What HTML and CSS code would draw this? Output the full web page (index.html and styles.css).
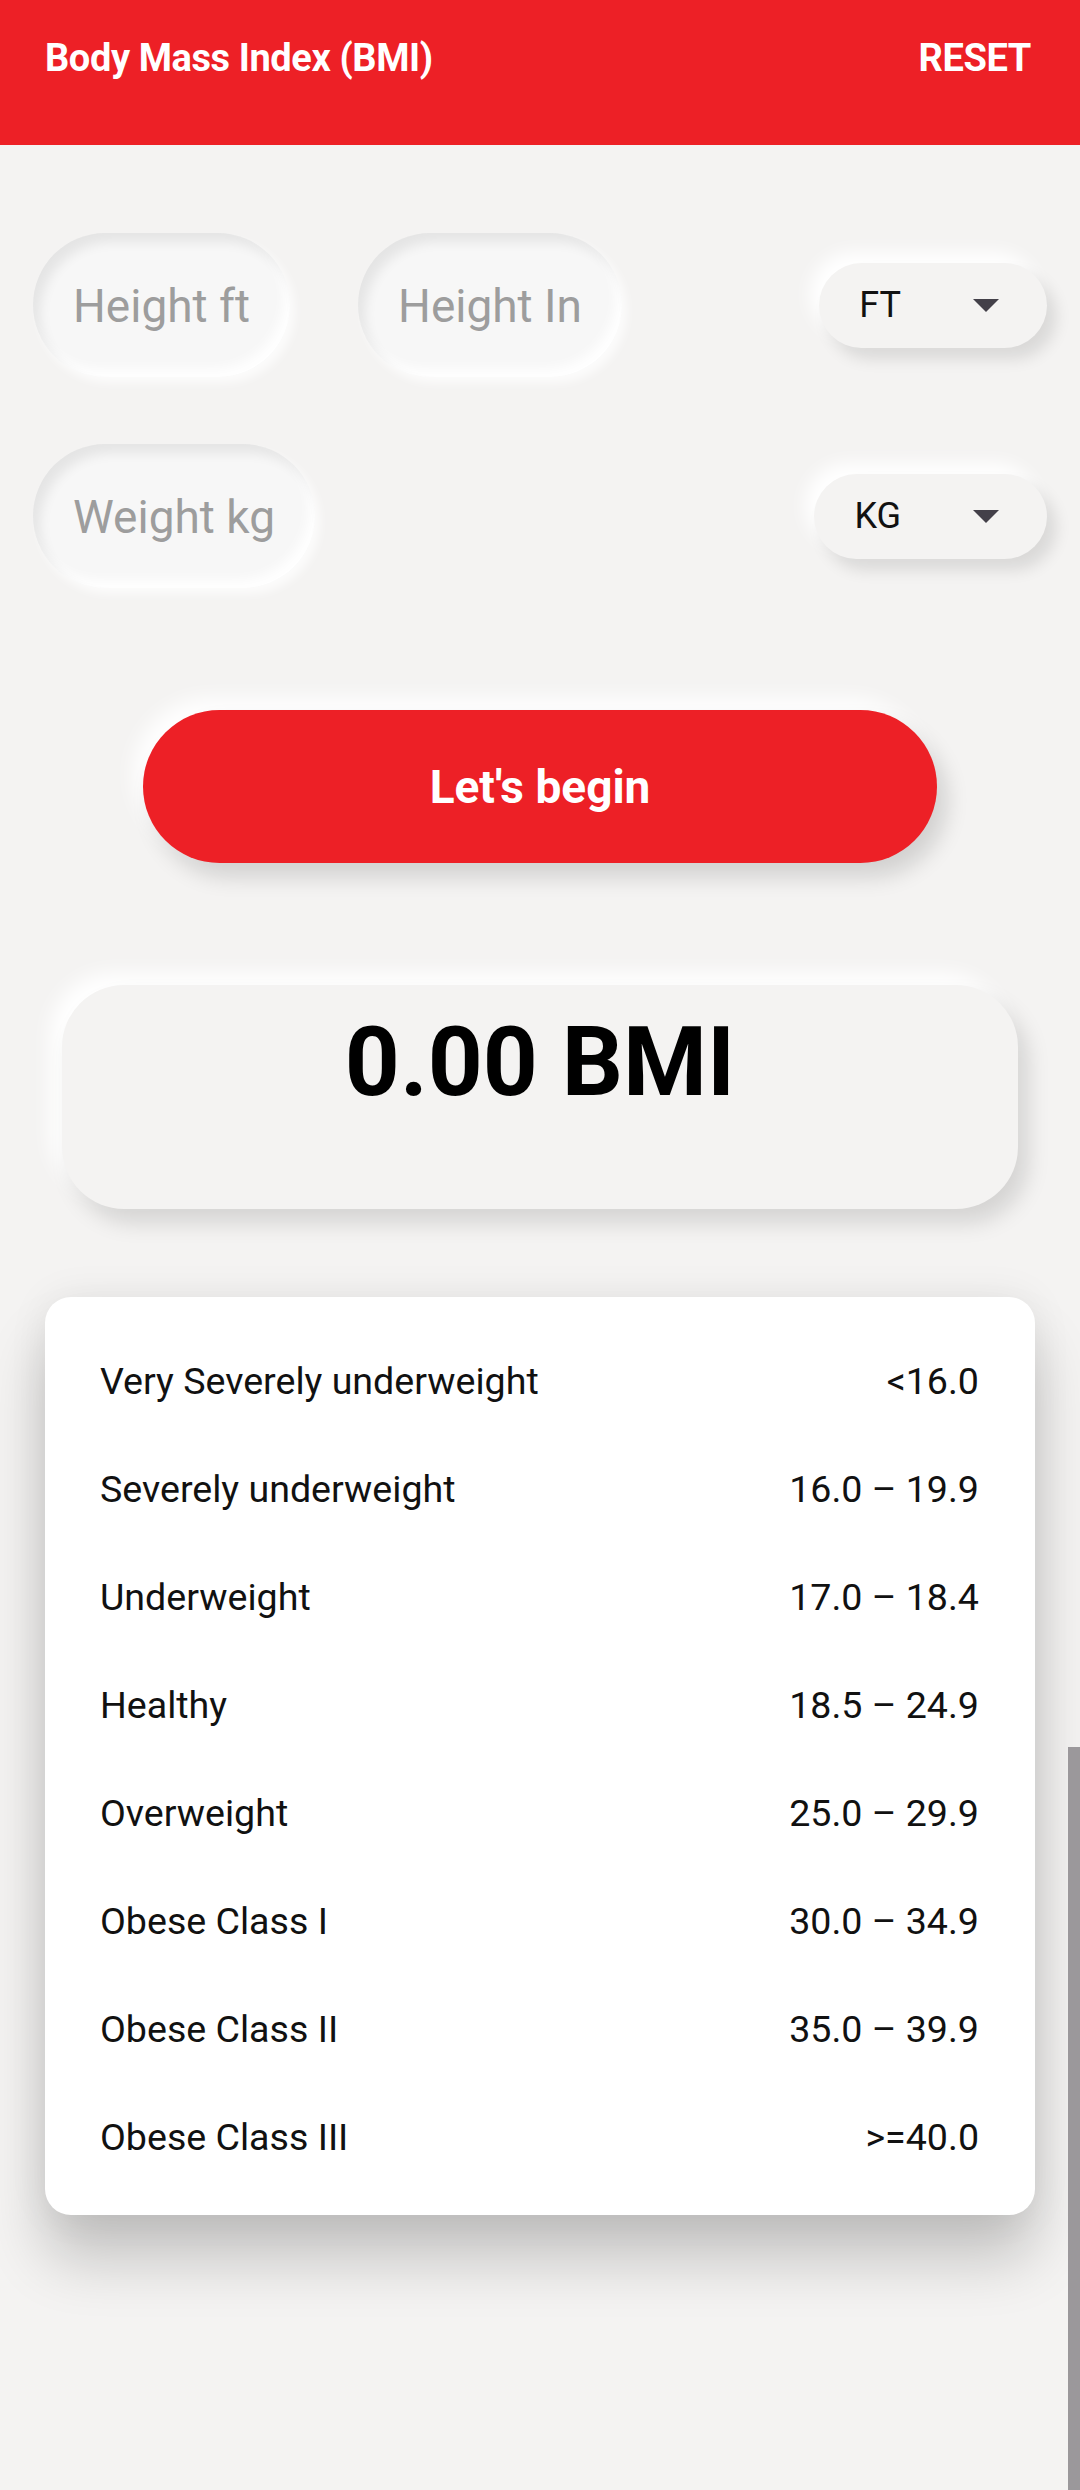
FILE: index.html
```html
<!DOCTYPE html>
<html lang="en">
<head>
<meta charset="utf-8">
<title>Body Mass Index (BMI)</title>
<link rel="stylesheet" href="styles.css">
</head>
<body>
<div class="screen">
  <header class="appbar">
    <span class="appbar-title">Body Mass Index (BMI)</span>
    <span class="appbar-action">RESET</span>
  </header>

  <main class="content">
    <div class="input-row row-height">
      <div class="field-group">
        <div class="field"><span class="placeholder">Height ft</span></div>
        <div class="field"><span class="placeholder">Height In</span></div>
      </div>
      <div class="spinner"><span class="spinner-text">FT</span><span class="caret"></span></div>
    </div>

    <div class="input-row row-weight">
      <div class="field-group">
        <div class="field"><span class="placeholder">Weight kg</span></div>
      </div>
      <div class="spinner"><span class="spinner-text">KG</span><span class="caret"></span></div>
    </div>

    <div class="button-wrap">
      <button class="begin-btn">Let's begin</button>
    </div>

    <div class="result-card">
      <span class="result-text">0.00 BMI</span>
    </div>

    <div class="table-card">
      <div class="table-row"><span>Very Severely underweight</span><span>&lt;16.0</span></div>
      <div class="table-row"><span>Severely underweight</span><span>16.0 – 19.9</span></div>
      <div class="table-row"><span>Underweight</span><span>17.0 – 18.4</span></div>
      <div class="table-row"><span>Healthy</span><span>18.5 – 24.9</span></div>
      <div class="table-row"><span>Overweight</span><span>25.0 – 29.9</span></div>
      <div class="table-row"><span>Obese Class I</span><span>30.0 – 34.9</span></div>
      <div class="table-row"><span>Obese Class II</span><span>35.0 – 39.9</span></div>
      <div class="table-row"><span>Obese Class III</span><span>&gt;=40.0</span></div>
    </div>
  </main>

  <div class="scrollbar"></div>
</div>
</body>
</html>
```

FILE: styles.css
```css
* { box-sizing: border-box; }

html, body {
  margin: 0;
  padding: 0;
  background: #f4f3f2;
}

body {
  font-family: Roboto, "Noto Sans", "Liberation Sans", sans-serif;
  color: #111;
}

.screen {
  position: relative;
  width: 1080px;
  height: 2490px;
  overflow: hidden;
  background: #f4f3f2;
}

/* App bar */
.appbar {
  height: 145px;
  background: #ed2026;
  color: #fff;
  display: flex;
  justify-content: space-between;
  align-items: flex-start;
  padding: 35px 49px 0 45px;
  font-weight: 700;
  font-size: 38px;
  line-height: 46px;
  letter-spacing: -0.4px;
}

/* Content */
.content {
  padding: 88px 0 0;
}

.input-row {
  display: flex;
  align-items: center;
  justify-content: space-between;
  padding: 0 33px;
}

.row-weight {
  margin-top: 67px;
}

.field-group {
  display: flex;
  gap: 68px;
  align-items: center;
}

.field {
  height: 144px;
  padding: 0 40px;
  border-radius: 72px;
  display: flex;
  align-items: center;
  background: #f7f7f7;
  box-shadow:
    inset 7px 9px 12px rgba(0, 0, 0, 0.075),
    inset -6px -8px 12px rgba(255, 255, 255, 0.95),
    5px 6px 10px rgba(255, 255, 255, 0.7);
}

.placeholder {
  font-size: 46px;
  line-height: 54px;
  color: #9d9d9d;
  padding-top: 2px;
}

.spinner {
  height: 85px;
  padding: 0 48px 0 40px;
  border-radius: 43px;
  display: flex;
  align-items: center;
  background: #f4f3f2;
  box-shadow:
    9px 11px 16px rgba(0, 0, 0, 0.11),
    -9px -11px 18px rgba(255, 255, 255, 1);
}

.spinner-text {
  font-size: 36px;
  line-height: 42px;
  color: #111;
}

.caret {
  margin-left: 72px;
  width: 0;
  height: 0;
  border-left: 13px solid transparent;
  border-right: 13px solid transparent;
  border-top: 13px solid #434049;
}

/* Button */
.button-wrap {
  display: flex;
  justify-content: center;
  margin-top: 122px;
}

.begin-btn {
  width: 794px;
  height: 153px;
  border: none;
  border-radius: 77px;
  background: #ed2026;
  color: #fff;
  font-family: Roboto, "Noto Sans", "Liberation Sans", sans-serif;
  font-size: 46px;
  font-weight: 700;
  box-shadow:
    10px 14px 22px rgba(0, 0, 0, 0.14),
    -10px -12px 20px rgba(255, 255, 255, 0.95);
}

/* Result card */
.result-card {
  margin: 122px 62px 0;
  height: 224px;
  border-radius: 62px;
  background: #f4f3f2;
  display: flex;
  justify-content: center;
  align-items: flex-start;
  padding-top: 21px;
  box-shadow:
    10px 14px 22px rgba(0, 0, 0, 0.13),
    -12px -12px 20px rgba(255, 255, 255, 1);
}

.result-text {
  font-size: 96px;
  font-weight: 700;
  line-height: 112px;
  color: #000;
}

/* Table card */
.table-card {
  margin: 88px 45px 0;
  height: 918px;
  background: #fff;
  border-radius: 26px;
  padding: 30px 56px 24px 55px;
  box-shadow:
    0 44px 60px rgba(0, 0, 0, 0.2),
    0 0 40px rgba(0, 0, 0, 0.07);
}

.table-row {
  height: 108px;
  display: flex;
  justify-content: space-between;
  align-items: center;
  font-size: 37.6px;
  line-height: 44px;
  color: #111;
}

/* Overlay scrollbar */
.scrollbar {
  position: absolute;
  right: 0;
  top: 1747px;
  width: 12px;
  height: 743px;
  background: #9b989b;
}
```
